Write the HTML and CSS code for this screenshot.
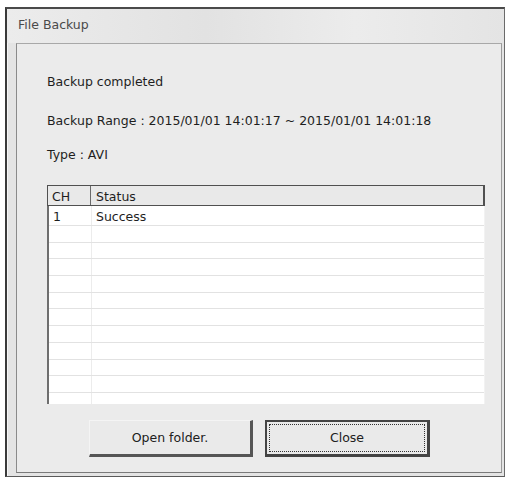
FILE: index.html
```html
<!DOCTYPE html>
<html>
<head>
<meta charset="utf-8">
<link rel="stylesheet" href="styles.css">
</head>
<body>
<div class="window">
  <div class="titlebar">File Backup</div>
  <div class="panel">
    <div class="line first">Backup completed</div>
    <div class="line second">Backup Range : 2015/01/01 14:01:17 ~ 2015/01/01 14:01:18</div>
    <div class="line third">Type : AVI</div>
    <div class="table">
      <div class="head">
        <div class="c1">CH</div>
        <div class="c2">Status</div>
      </div>
      <div class="body">
        <div class="row firstrow"><div class="c1">1</div><div class="c2">Success</div></div>
        <div class="row"><div class="c1"></div><div class="c2"></div></div>
        <div class="row"><div class="c1"></div><div class="c2"></div></div>
        <div class="row"><div class="c1"></div><div class="c2"></div></div>
        <div class="row"><div class="c1"></div><div class="c2"></div></div>
        <div class="row"><div class="c1"></div><div class="c2"></div></div>
        <div class="row"><div class="c1"></div><div class="c2"></div></div>
        <div class="row"><div class="c1"></div><div class="c2"></div></div>
        <div class="row"><div class="c1"></div><div class="c2"></div></div>
        <div class="row"><div class="c1"></div><div class="c2"></div></div>
        <div class="row"><div class="c1"></div><div class="c2"></div></div>
        <div class="row last"><div class="c1"></div><div class="c2"></div></div>
      </div>
    </div>
    <div class="buttons">
      <div class="btn open">Open folder.</div>
      <div class="btn close"><span class="focus">Close</span></div>
    </div>
  </div>
</div>
</body>
</html>
```

FILE: styles.css
```css
* { box-sizing: border-box; }
html, body { margin: 0; padding: 0; background: #ffffff; }
body {
  font-family: "DejaVu Sans", "Liberation Sans", sans-serif;
  font-size: 12.5px;
  color: #1e1e1e;
  padding: 7px 0 0 5px;
}
.window {
  width: 500px;
  height: 470px;
  border-left: 2px solid #3a3a3a;
  border-top: 2px solid #4a4a4a;
  border-right: 1px solid #6a6a6a;
  border-bottom: 1px solid #5a5a5a;
  background: #e4e4e4;
  display: flex;
  flex-direction: column;
  box-shadow: inset 1px 1px 0 #f6f6f6;
}
.titlebar {
  height: 34px;
  flex: none;
  padding-left: 11px;
  line-height: 32px;
  font-size: 12.5px;
  color: #4a4a4a;
  background: linear-gradient(90deg, #ececec 0%, #e2e2e2 40%, #ececec 70%, #e4e4e4 100%);
}
.panel {
  flex: 1;
  margin: 0 2px 3px 9px;
  border-left: 1px solid #8a8a8a;
  border-top: 1px solid #a8a8a8;
  border-right: 1px solid #9a9a9a;
  border-bottom: 1px solid #7a7a7a;
  background: #ebebeb;
  padding-left: 30px;
  display: flex;
  flex-direction: column;
}
.line { height: 16px; line-height: 16px; }
.first { margin-top: 30px; }
.second { margin-top: 23px; }
.third { margin-top: 18px; }
.table {
  margin-top: 22px;
  width: 438px;
  display: flex;
  flex-direction: column;
}
.head {
  height: 21px;
  display: flex;
  border: 1px solid #505050;
  border-right-width: 2px;
  background: #e9e9e9;
  line-height: 21px;
}
.head .c1 { width: 43px; padding-left: 4px; border-right: 1px solid #6a6a6a; }
.head .c2 { flex: 1; padding-left: 5px; }
.body {
  background: #ffffff;
  border-left: 2px solid #6e6e6e;
  border-right: 1px solid #f2f2f2;
}
.row {
  height: 16.7px;
  display: flex;
  border-bottom: 1px solid #e2e2e2;
}
.row.firstrow { height: 20px; line-height: 21px; }
.row.last { height: 11px; border-bottom: none; }
.row .c1 { width: 43px; padding-left: 4px; border-right: 1px solid #ececec; }
.row .c2 { flex: 1; padding-left: 4px; }
.buttons {
  margin-top: 16px;
  display: flex;
  padding-left: 42px;
  gap: 12px;
}
.btn {
  height: 37px;
  width: 164px;
  display: flex;
  align-items: center;
  justify-content: center;
  background: #eaeaea;
  color: #202020;
}
.btn.open {
  border-top: 1px solid #f4f4f4;
  border-left: 1px solid #f4f4f4;
  border-right: 3px solid #555555;
  border-bottom: 3px solid #555555;
}
.btn.close {
  width: 165px;
  border: 2px solid #444444;
  border-right-width: 3px;
  border-bottom-width: 3px;
  padding: 2px;
}
.focus {
  flex: 1;
  align-self: stretch;
  display: flex;
  align-items: center;
  justify-content: center;
  border: 1px dotted #333333;
}
```
